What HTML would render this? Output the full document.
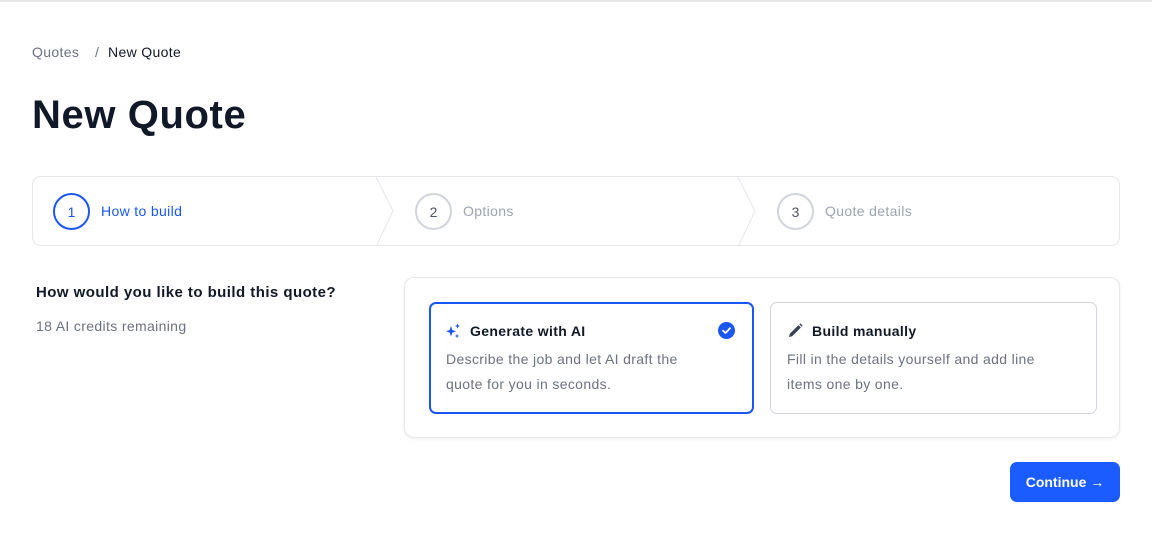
<!DOCTYPE html>
<html><head><style>
*{box-sizing:border-box;margin:0;padding:0}
body{width:1152px;height:542px;background:#fff;font-family:"Liberation Sans",sans-serif;position:relative;overflow:hidden;color:#111827;letter-spacing:0.35px}
.topline{position:absolute;left:0;top:0;width:1152px;height:2px;background:#e5e7eb}
.abs{position:absolute;white-space:nowrap}
.steps{position:absolute;left:32px;top:176px;width:1088px;height:70px;border:1px solid #e5e7eb;border-radius:9px;overflow:hidden}
.circ{position:absolute;width:37px;height:37px;border-radius:50%;border:2px solid #d1d5db;font-size:14px;color:#4b5563;display:flex;align-items:center;justify-content:center;letter-spacing:0}
.panel{position:absolute;left:404px;top:277px;width:716px;height:161px;border:1px solid #e5e7eb;border-radius:10px;box-shadow:0 1px 3px rgba(0,0,0,.06)}
.card{position:absolute;border-radius:7px;border:1px solid #d1d5db}
.t{position:absolute;font-size:14px;font-weight:bold;color:#111827;top:21px;white-space:nowrap}
.d{position:absolute;font-size:14px;color:#6b7280;line-height:25px;top:44px;left:16px;white-space:nowrap}
.btn{position:absolute;left:1010px;top:462px;width:110px;height:40px;background:#1a5cff;border-radius:7px;color:#fff;font-weight:bold;font-size:14px;display:flex;align-items:center;justify-content:center;letter-spacing:0}
</style></head><body>
<div class="topline"></div>
<div class="abs" style="left:32px;top:44px;font-size:14px;color:#6b7280">Quotes</div>
<div class="abs" style="left:95px;top:44px;font-size:14px;color:#6b7280">/</div>
<div class="abs" style="left:108px;top:44px;font-size:14px;color:#111827">New Quote</div>
<div class="abs" style="left:32px;top:93px;font-size:40px;font-weight:bold;color:#111827;letter-spacing:0.6px">New Quote</div>
<div class="steps">
<svg width="1088" height="70" style="position:absolute;left:0;top:0"><polyline points="343,0 360,34 343,70" fill="none" stroke="#e5e7eb" stroke-width="1"/><polyline points="705,0 722,34 705,70" fill="none" stroke="#e5e7eb" stroke-width="1"/></svg>
<div class="circ" style="left:20px;top:16px;border-color:#1a56f0;color:#1a56f0">1</div>
<div class="abs" style="left:68px;top:26px;font-size:14px;color:#1a56f0">How to build</div>
<div class="circ" style="left:382px;top:16px">2</div>
<div class="abs" style="left:430px;top:26px;font-size:14px;color:#9ca3af">Options</div>
<div class="circ" style="left:744px;top:16px">3</div>
<div class="abs" style="left:792px;top:26px;font-size:14px;color:#9ca3af">Quote details</div>
</div>
<div class="abs" style="left:36px;top:284px;font-size:15px;font-weight:bold;color:#111827;letter-spacing:0.45px">How would you like to build this quote?</div>
<div class="abs" style="left:36px;top:318px;font-size:14px;color:#6b7280">18 AI credits remaining</div>
<div class="panel">
<div class="card" style="left:24px;top:24px;width:325px;height:112px;border:2px solid #1a56f0">
<svg style="position:absolute;left:14px;top:19px" width="16" height="16" viewBox="0 0 16 16" fill="#1a56f0"><path d="M6 3 L7.3 7 L11 8.3 L7.3 9.6 L6 13.5 L4.7 9.6 L1 8.3 L4.7 7Z"/><path d="M12.5 0.5 L13.2 2.3 L15 3 L13.2 3.7 L12.5 5.5 L11.8 3.7 L10 3 L11.8 2.3Z"/><path d="M12 11 L12.6 12.4 L14 13 L12.6 13.6 L12 15 L11.4 13.6 L10 13 L11.4 12.4Z"/></svg>
<div class="t" style="left:39px;top:19px">Generate with AI</div>
<svg style="position:absolute;left:287px;top:18px" width="17" height="17" viewBox="0 0 17 17"><circle cx="8.5" cy="8.5" r="8.5" fill="#1a56f0"/><path d="M5 8.7 L7.5 11 L12 6.2" fill="none" stroke="#fff" stroke-width="1.8" stroke-linecap="round" stroke-linejoin="round"/></svg>
<div class="d" style="left:15px;top:43px">Describe the job and let AI draft the<br>quote for you in seconds.</div>
</div>
<div class="card" style="left:365px;top:24px;width:327px;height:112px">
<svg style="position:absolute;left:17px;top:20px" width="15" height="15" viewBox="0 0 15 15" fill="#374151"><path d="M1 14 L1.8 10.8 L10.5 2.1 L12.9 4.5 L4.2 13.2Z"/><path d="M11.3 1.3 L12.3 0.3 L14.7 2.7 L13.7 3.7Z"/></svg>
<div class="t" style="left:41px;top:20px">Build manually</div>
<div class="d" style="top:44px">Fill in the details yourself and add line<br>items one by one.</div>
</div>
</div>
<div class="btn">Continue →</div>
</body></html>
